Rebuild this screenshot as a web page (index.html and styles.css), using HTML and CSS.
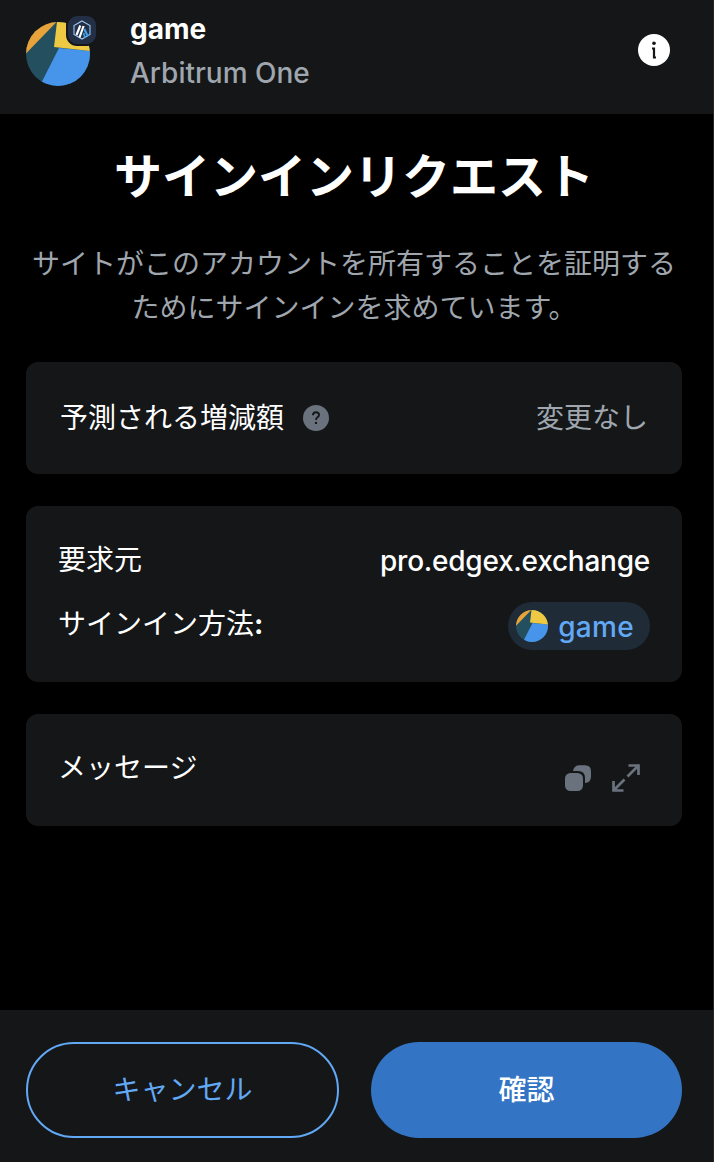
FILE: index.html
```
<!DOCTYPE html>
<html lang="ja">
<head>
  <meta charset="UTF-8">
  <meta name="viewport" content="width=device-width, initial-scale=1.0">
  <title>サインインリクエスト</title>
  <link rel="stylesheet" href="styles.css">
</head>
<body>
  <header class="header">
    <div class="account-avatar">
      <svg class="avatar" viewBox="0 0 64 64">
        <defs>
          <clipPath id="avatar-clip"><circle cx="32" cy="32" r="32"/></clipPath>
          <g id="avatar-art" clip-path="url(#avatar-clip)">
            <rect width="64" height="64" fill="#234f5e"/>
            <path d="M0 0H30.500L0 31.500Z" fill="#e8a33a"/>
            <path d="M33 26L16 59.500V64H64V29Z" fill="#4795ea"/>
            <path d="M31 0L28 25L64 29V0Z" fill="#eec944"/>
          </g>
        </defs>
        <use href="#avatar-art"/>
      </svg>
      <svg class="network-badge" viewBox="0 0 28 28">
        <path d="M14 5L22 9.500V18.500L14 23L6 18.500V9.500Z" fill="none" stroke="#9dc8ef" stroke-width="1.100"/>
        <path d="M8.500 19L12.300 9.500M11.500 21.500L15.600 10" stroke="#fff" stroke-width="2.200"/>
        <path d="M16.300 13L19.800 20.300" stroke="#429ee9" stroke-width="2.200"/>
        <path d="M15.500 17L17 21.500" stroke="#429ee9" stroke-width="1.700"/>
      </svg>
    </div>
    <div class="account-text">
      <div class="account-name">game</div>
      <div class="network-name">Arbitrum One</div>
    </div>
    <svg class="info-icon" viewBox="0 0 32 32">
      <circle cx="16" cy="16" r="16" fill="#fff"/>
      <circle cx="16" cy="9.300" r="1.800" fill="#141618"/>
      <path d="M14 14.500H16V23.500H18" fill="none" stroke="#141618" stroke-width="2.200"/>
    </svg>
  </header>

  <main class="content">
    <h1>サインインリクエスト</h1>
    <p class="description">サイトがこのアカウントを所有することを証明するためにサインインを求めています。</p>

    <section class="card simulation">
      <span class="simulation-label">予測される増減額</span>
      <svg class="help-icon" viewBox="0 0 26 26">
        <circle cx="13" cy="13" r="13" fill="#6a737d"/>
        <path d="M9.900 10.300Q10.100 7.300 13 7.300Q16 7.300 16 9.900Q16 11.200 14.500 12.200Q13 13.200 13 14.900" fill="none" stroke="#141618" stroke-width="1.900"/>
        <circle cx="13" cy="17.900" r="1.200" fill="#141618"/>
      </svg>
      <span class="muted">変更なし</span>
    </section>

    <section class="card request">
      <div class="row">
        <span>要求元</span>
        <span class="origin">pro.edgex.exchange</span>
      </div>
      <div class="row">
        <span>サインイン方法<span class="colon">:</span></span>
        <span class="account-chip">
          <svg class="chip-avatar" viewBox="0 0 64 64"><use href="#avatar-art"/></svg>
          <span class="chip-name">game</span>
        </span>
      </div>
    </section>

    <section class="card message">
      <span class="message-label">メッセージ</span>
      <svg class="copy-icon" viewBox="0 0 26 26">
        <path d="M8 6Q9 0.300 14.500 0.300H20Q26 0.300 26 6.300V11.500Q26 17.500 20 18V13Q20 6 13 6Z" fill="#6a737d"/>
        <rect x="0" y="8" width="18" height="18" rx="5.500" fill="#6a737d"/>
      </svg>
      <svg class="expand-icon" viewBox="0 0 28 28">
        <path d="M16.500 1.500H26.500V11M26 2L15.500 12.500M1.500 17V26.500H11.500M2 26L12.500 15.500" fill="none" stroke="#6a737d" stroke-width="2.700"/>
      </svg>
    </section>
  </main>

  <footer class="footer">
    <button type="button" class="btn btn-cancel">キャンセル</button>
    <button type="button" class="btn btn-confirm">確認</button>
  </footer>
</body>
</html>
```

FILE: styles.css
```
* {
  box-sizing: border-box;
}

body {
  margin: 0;
  height: 1162px;
  display: flex;
  flex-direction: column;
  border-right: 1px solid #22262a;
  background-color: #000;
  color: #fff;
  font-family: Inter, "Noto Sans CJK JP", sans-serif;
  font-size: 28px;
  line-height: 44px;
  overflow: hidden;
}

svg {
  display: block;
  flex-shrink: 0;
}

/* Header */
.header {
  display: flex;
  align-items: flex-start;
  height: 114px;
  padding: 0 43px 0 26px;
  background-color: #141618;
}

.account-avatar {
  position: relative;
  margin-top: 22px;
}

.avatar {
  width: 64px;
  height: 64px;
}

.network-badge {
  position: absolute;
  top: -8px;
  right: -8px;
  width: 32px;
  height: 32px;
  border: 2px solid #141618;
  border-radius: 11px;
  background-color: #222f45;
}

.account-text {
  flex: 1;
  margin: 7px 0 0 40px;
}

.account-name {
  font-weight: 700;
}

.network-name {
  color: #9fa6ae;
  font-weight: 500;
}

.info-icon {
  width: 32px;
  height: 32px;
  margin-top: 34px;
}

/* Content */
.content {
  flex: 1;
  padding: 0 31px 0 26px;
}

h1 {
  margin: 29px 0 0;
  font-size: 48px;
  line-height: 68px;
  font-weight: 700;
  text-align: center;
}

.description {
  margin: 31px 0 32px;
  color: #9fa6ae;
  text-align: center;
}

.card {
  margin-bottom: 32px;
  border-radius: 12px;
  background-color: #141618;
}

.simulation {
  display: flex;
  align-items: center;
  height: 112px;
  padding: 0 34px;
}

.help-icon {
  width: 26px;
  height: 26px;
  margin-left: 19px;
}

.muted {
  margin-left: auto;
  color: #9fa6ae;
}

.request {
  height: 176px;
  padding: 32px;
}

.row {
  display: flex;
  justify-content: space-between;
}

.row + .row {
  margin-top: 19px;
}

.origin {
  padding-top: 1px;
  font-weight: 500;
  letter-spacing: -0.25px;
}

.colon {
  font-weight: 700;
}

.account-chip {
  display: flex;
  align-items: center;
  gap: 10px;
  height: 48px;
  padding: 0 16px 0 8px;
  border-radius: 24px;
  background-color: #202b38;
  color: #62a9f5;
  font-weight: 500;
}

.chip-name {
  padding-top: 1px;
  letter-spacing: 0.3px;
}

.chip-avatar {
  width: 32px;
  height: 32px;
}

.message {
  display: flex;
  height: 112px;
  padding: 32px 42px 0 32px;
}

.message-label {
  flex: 1;
}

.copy-icon {
  width: 26px;
  height: 26px;
  margin: 19px 21px 0 0;
}

.expand-icon {
  width: 28px;
  height: 28px;
  margin-top: 18px;
}

/* Footer */
.footer {
  display: flex;
  gap: 32px;
  height: 152px;
  padding: 32px 31px 24px 26px;
  background-color: #141618;
}

.btn {
  height: 96px;
  padding: 0;
  border: none;
  border-radius: 48px;
  font: inherit;
}

.btn-cancel {
  width: 313px;
  border: 2px solid #62a9f5;
  background-color: transparent;
  color: #62a9f5;
}

.btn-confirm {
  width: 311px;
  background-color: #3375c4;
  color: #fff;
  font-weight: 500;
}
```
